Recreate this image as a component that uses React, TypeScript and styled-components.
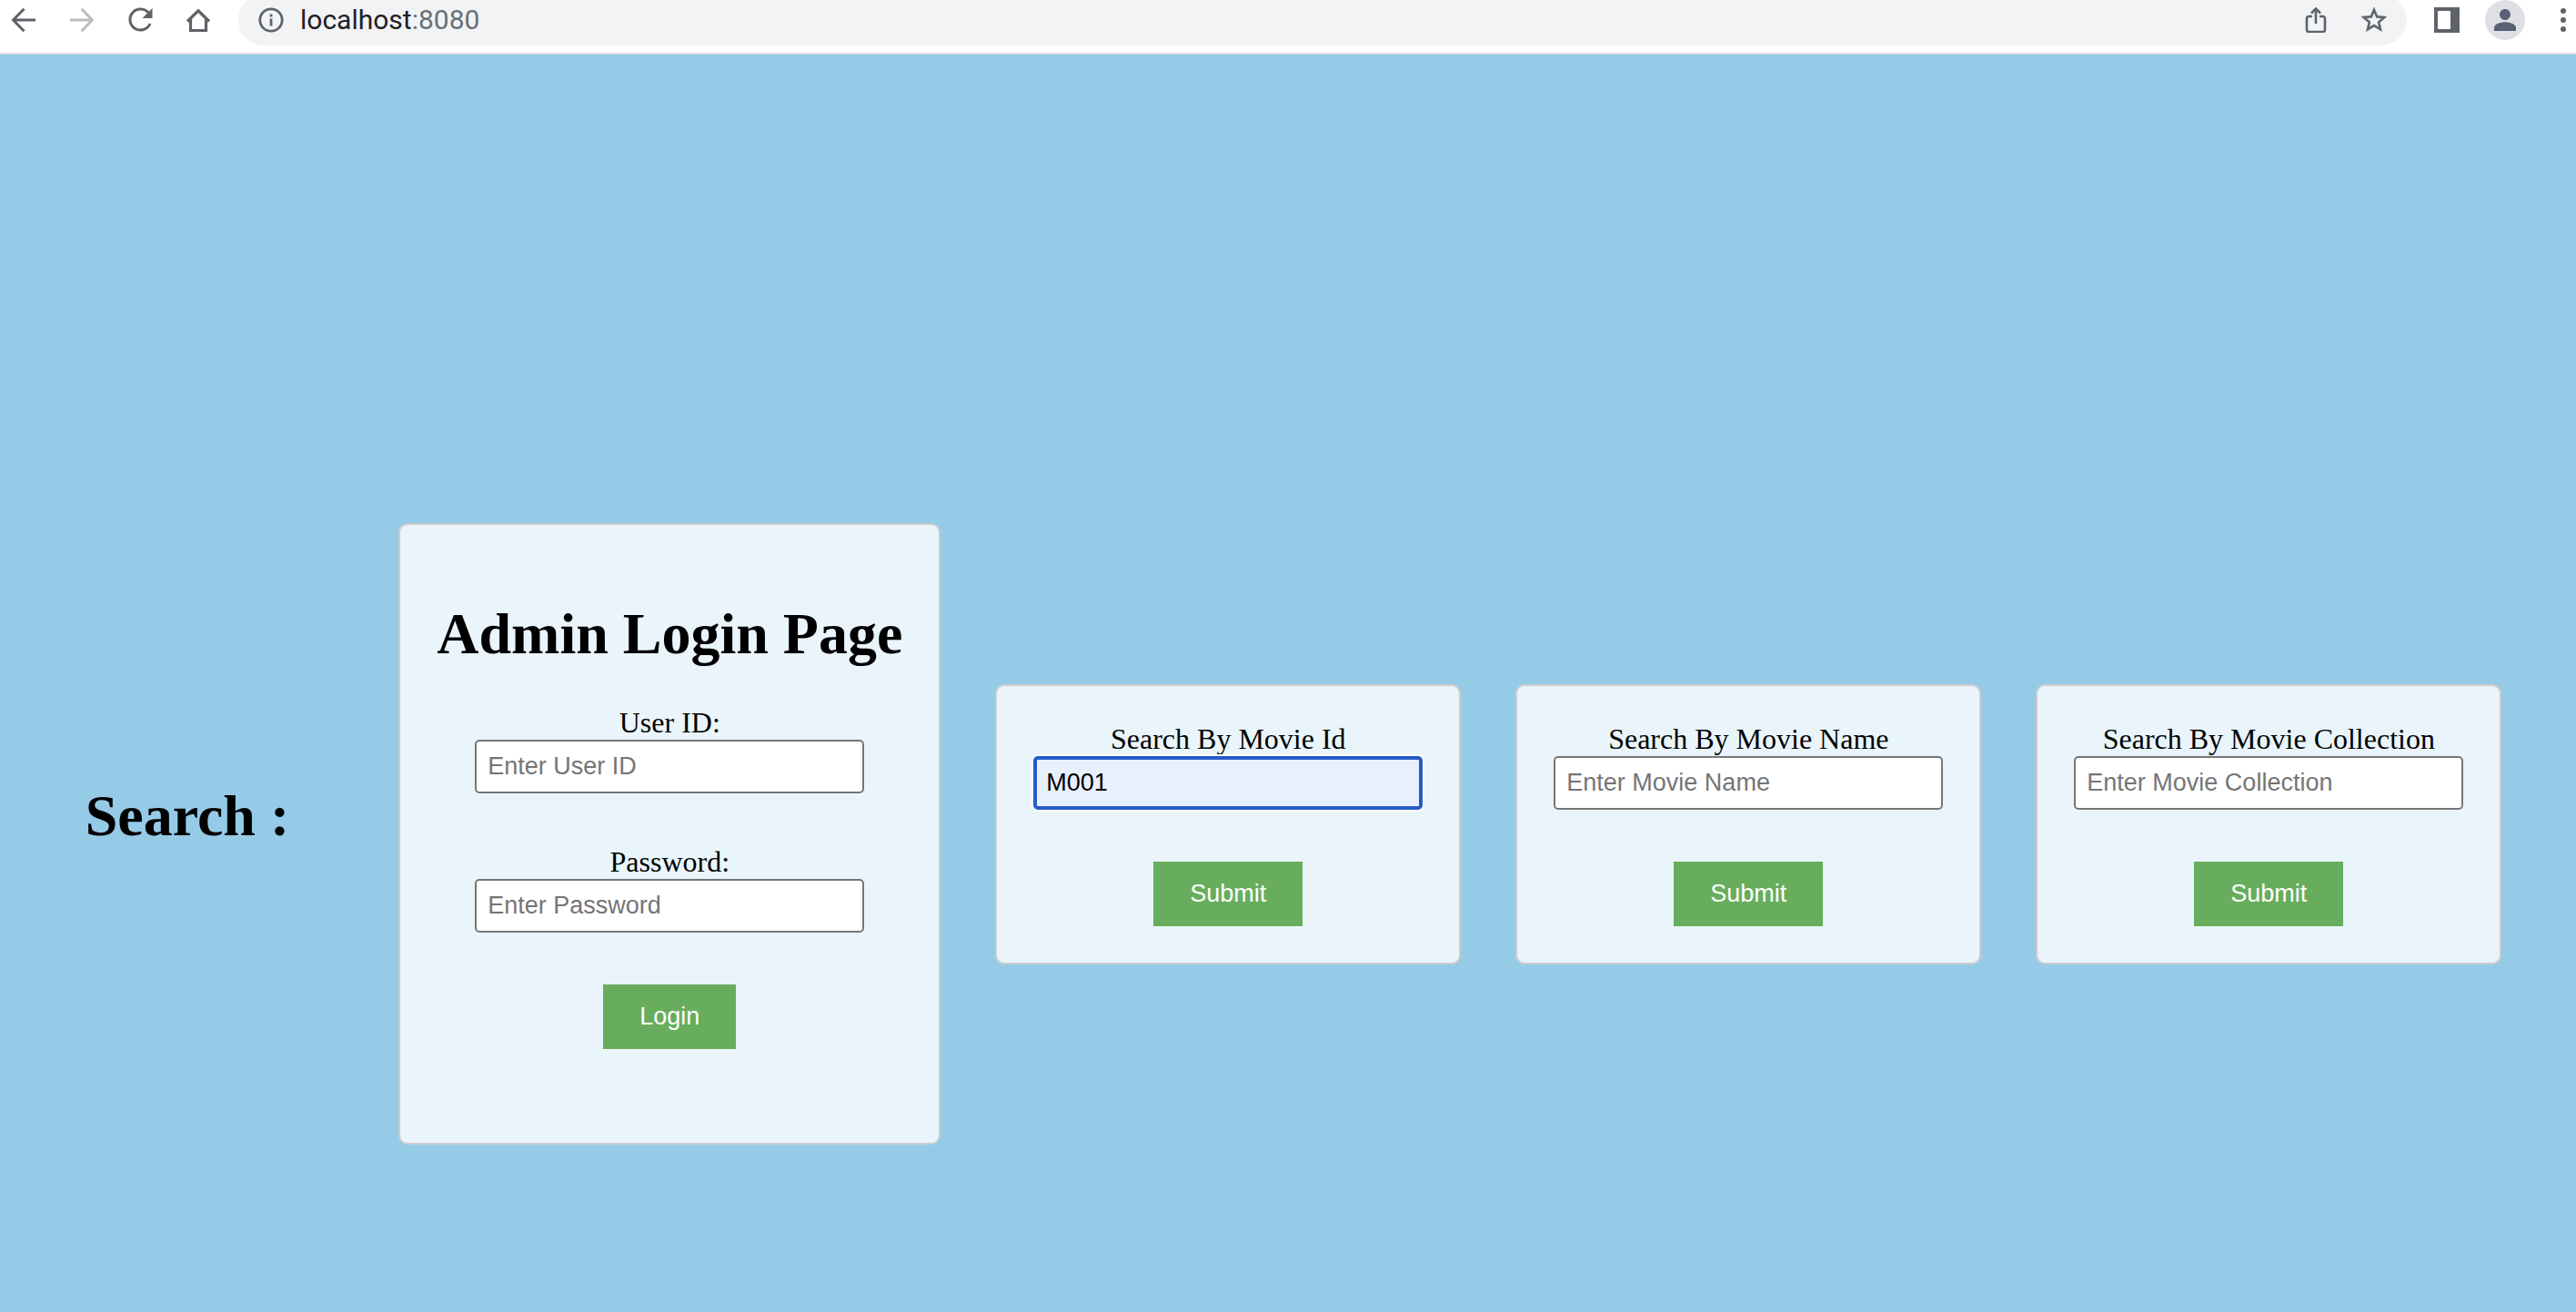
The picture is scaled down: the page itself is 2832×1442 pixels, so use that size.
import React, { useState } from "react";
import styled, { createGlobalStyle } from "styled-components";

const GlobalStyle = createGlobalStyle`
  *, *::before, *::after { box-sizing: border-box; }
  body {
    margin: 0;
    background: #96cbe8;
    color: #000;
    font-family: "Liberation Serif", "Times New Roman", serif;
    font-size: 32px;
    line-height: 37px;
  }
`;

const Page = styled.div`
  display: flex;
  flex-direction: column;
  min-height: 100vh;
  overflow: hidden;
`;

/* Browser toolbar, its upper edge tucked under the top of the window */
const Toolbar = styled.header`
  display: flex;
  align-items: center;
  margin-top: -6px;
  padding-bottom: 8px;
  background: #fff;
  border-bottom: 2px solid #dadcdc;
`;

const NavGroup = styled.nav`
  display: flex;
  gap: 12px;
  padding-right: 18px;
`;

const ActionGroup = styled.div`
  display: flex;
  align-items: center;
  gap: 28px;
  padding-left: 30px;
`;

const IconButton = styled.button<{ $width: number; $color?: string }>`
  display: flex;
  align-items: center;
  justify-content: center;
  flex: none;
  width: ${(p) => p.$width}px;
  height: 44px;
  padding: 0;
  border: 0;
  background: none;
  color: ${(p) => p.$color ?? "#5f6368"};
  cursor: pointer;
`;

const AvatarButton = styled(IconButton)`
  border-radius: 50%;
  background: #dee0e5;
`;

const Omnibox = styled.div`
  display: flex;
  flex: 1;
  align-items: center;
  height: 56px;
  padding: 0 22px;
  border-radius: 28px;
  background: #f1f3f4;
`;

const Url = styled.div`
  flex: 1;
  padding-left: 18px;
  color: #202124;
  font-family: Roboto, sans-serif;
  font-size: 30px;
  line-height: 36px;
`;

const Port = styled.span`
  color: #6b6f73;
`;

const OmniboxActions = styled.div`
  display: flex;
  gap: 36px;
`;

const Content = styled.main`
  display: flex;
  flex: 1;
  align-items: center;
  justify-content: center;
  gap: 60px;
  padding: 330px 0 0 12px;
`;

const Title = styled.h1`
  margin: 43px 0;
  font-size: 64px;
  line-height: 73px;
  font-weight: bold;
  text-align: center;
  white-space: nowrap;
`;

const SearchTitle = styled(Title)`
  margin: 0 60px 40px 0;
`;

const SearchForms = styled.div`
  display: flex;
  gap: 60px;
  margin-bottom: 20px;
`;

const Card = styled.form<{ $tall?: boolean }>`
  display: flex;
  flex-direction: column;
  align-items: center;
  padding: 40px 40px ${(p) => (p.$tall ? 103 : 40)}px;
  border: 2px solid #ccc;
  border-radius: 10px;
  background: #e9f5fa;
`;

const Field = styled.div`
  display: flex;
  flex-direction: column;
  width: 428px;
  margin-bottom: 57px;
  text-align: center;
`;

const TextInput = styled.input<{ $active?: boolean }>`
  width: 100%;
  height: 59px;
  padding: ${(p) => (p.$active ? "0 10px" : "0 12px")};
  border: ${(p) => (p.$active ? "4px solid #265cc7" : "2px solid #767676")};
  border-radius: 5px;
  outline: none;
  box-shadow: ${(p) => (p.$active ? "0 0 0 2px #fff" : "none")};
  background: ${(p) => (p.$active ? "#e8f0fe" : "#fff")};
  color: #000;
  font-family: "Liberation Sans", Arial, sans-serif;
  font-size: 27px;

  &::placeholder {
    color: #757575;
    opacity: 1;
  }
`;

const SubmitButton = styled.button`
  padding: 20px 40px;
  border: 0;
  background: #68ad5d;
  color: #fff;
  font-family: "Liberation Sans", Arial, sans-serif;
  font-size: 27px;
  line-height: 31px;
  cursor: pointer;
`;

const BackIcon = () => (
  <svg width="28" height="28" viewBox="0 0 28 28" fill="none" stroke="currentColor" strokeWidth="3">
    <path d="M27 14H3M14.500 1.800 2.500 14l12 12.200" />
  </svg>
);

const ForwardIcon = () => (
  <svg width="28" height="28" viewBox="0 0 28 28" fill="none" stroke="currentColor" strokeWidth="3">
    <path d="M1 14h24M13.500 1.800l12 12.200-12 12.200" />
  </svg>
);

const ReloadIcon = () => (
  <svg width="28" height="28" viewBox="0 0 28 28" fill="none">
    <path d="M23.600 6.600A11.500 11.500 0 1 0 25 18" stroke="currentColor" strokeWidth="3" />
    <path d="M27.500 1v11h-11z" fill="currentColor" />
  </svg>
);

const HomeIcon = () => (
  <svg width="28" height="28" viewBox="0 0 28 28" fill="none" stroke="currentColor" strokeWidth="3.200">
    <path d="M2 15.500 14 3.800l12 11.700M5.500 13v12.500h17V13" />
  </svg>
);

const InfoIcon = () => (
  <svg width="28" height="28" viewBox="0 0 28 28" fill="none" stroke="#5f6368" strokeWidth="2.800">
    <circle cx="14" cy="14" r="12.200" />
    <path d="M14 12.500v8M14 7.500v3" />
  </svg>
);

const ShareIcon = () => (
  <svg width="28" height="28" viewBox="0 0 28 28" fill="none" stroke="currentColor" strokeWidth="2.600">
    <path d="M10 10H6.500A2.500 2.500 0 0 0 4 12.500v12A2.500 2.500 0 0 0 6.500 27h15a2.500 2.500 0 0 0 2.500-2.500v-12a2.500 2.500 0 0 0-2.500-2.500H18" />
    <path d="M14 18V2M9 6.500l5-5 5 5" />
  </svg>
);

const StarIcon = () => (
  <svg width="30" height="30" viewBox="2 2 20 20" fill="currentColor" stroke="currentColor" strokeWidth="0.300">
    <path d="M22 9.240l-7.190-.620L12 2 9.190 8.630 2 9.240l5.460 4.730L5.820 21 12 17.270 18.180 21l-1.630-7.030L22 9.240zM12 15.400l-3.760 2.270 1-4.280-3.320-2.880 4.380-.380L12 6.100l1.710 4.040 4.380.380-3.320 2.880 1 4.280L12 15.400z" />
  </svg>
);

const PanelIcon = () => (
  <svg width="28" height="28" viewBox="0 0 28 28" fill="currentColor">
    <path fillRule="evenodd" d="M0 0h28v28H0zM4 4v20h14V4z" />
  </svg>
);

const PersonIcon = () => (
  <svg width="24" height="24" viewBox="4 4 16 16" fill="currentColor">
    <path d="M12 12c2.210 0 4-1.790 4-4s-1.790-4-4-4-4 1.790-4 4 1.790 4 4 4zm0 1.500c-2.670 0-8 1.340-8 4V20h16v-2.500c0-2.660-5.330-4-8-4z" />
  </svg>
);

const MenuIcon = () => (
  <svg width="28" height="28" viewBox="0 0 28 28" fill="currentColor">
    <circle cx="14" cy="4" r="3" />
    <circle cx="14" cy="14" r="3" />
    <circle cx="14" cy="24" r="3" />
  </svg>
);

const searches = [
  { id: "movie-id", label: "Search By Movie Id", placeholder: "Enter Movie Id", initial: "M001", active: true },
  { id: "movie-name", label: "Search By Movie Name", placeholder: "Enter Movie Name", initial: "", active: false },
  { id: "movie-collection", label: "Search By Movie Collection", placeholder: "Enter Movie Collection", initial: "", active: false },
];

type LabelledInputProps = {
  id: string;
  label: string;
  placeholder: string;
  type?: string;
  initial?: string;
  active?: boolean;
};

function LabelledInput({ id, label, placeholder, type = "text", initial = "", active }: LabelledInputProps) {
  const [value, setValue] = useState(initial);
  return (
    <Field>
      <label htmlFor={id}>{label}</label>
      <TextInput
        id={id}
        type={type}
        placeholder={placeholder}
        value={value}
        $active={active}
        onChange={(e) => setValue(e.target.value)}
      />
    </Field>
  );
}

const stay = (e: React.FormEvent) => e.preventDefault();

export default function App() {
  return (
    <Page>
      <GlobalStyle />
      <Toolbar>
        <NavGroup>
          <IconButton $width={52} aria-label="Back"><BackIcon /></IconButton>
          <IconButton $width={52} $color="#babcbe" aria-label="Forward"><ForwardIcon /></IconButton>
          <IconButton $width={52} aria-label="Reload"><ReloadIcon /></IconButton>
          <IconButton $width={52} aria-label="Home"><HomeIcon /></IconButton>
        </NavGroup>
        <Omnibox>
          <IconButton $width={28} aria-label="Site information"><InfoIcon /></IconButton>
          <Url>localhost<Port>:8080</Port></Url>
          <OmniboxActions>
            <IconButton $width={28} aria-label="Share"><ShareIcon /></IconButton>
            <IconButton $width={28} aria-label="Bookmark"><StarIcon /></IconButton>
          </OmniboxActions>
        </Omnibox>
        <ActionGroup>
          <IconButton $width={28} aria-label="Side panel"><PanelIcon /></IconButton>
          <AvatarButton $width={44} $color="#5a6175" aria-label="Profile"><PersonIcon /></AvatarButton>
          <IconButton $width={28} aria-label="Menu"><MenuIcon /></IconButton>
        </ActionGroup>
      </Toolbar>
      <Content>
        <SearchTitle>Search :</SearchTitle>
        <Card $tall onSubmit={stay}>
          <Title>Admin Login Page</Title>
          <LabelledInput id="user-id" label="User ID:" placeholder="Enter User ID" />
          <LabelledInput id="password" label="Password:" placeholder="Enter Password" type="password" />
          <SubmitButton type="submit">Login</SubmitButton>
        </Card>
        <SearchForms>
          {searches.map((s) => (
            <Card key={s.id} onSubmit={stay}>
              <LabelledInput {...s} />
              <SubmitButton type="submit">Submit</SubmitButton>
            </Card>
          ))}
        </SearchForms>
      </Content>
    </Page>
  );
}
